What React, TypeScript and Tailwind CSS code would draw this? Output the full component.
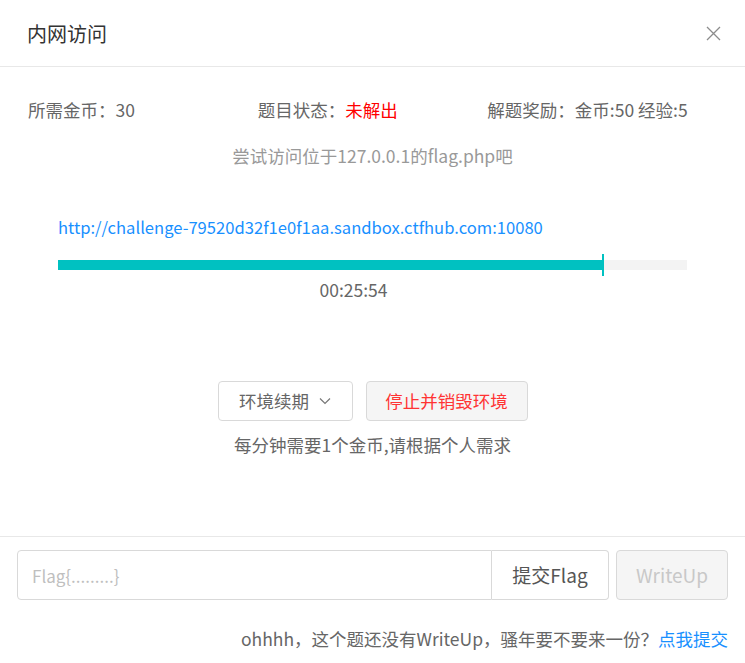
import React from "react";

export default function App() {
  const font = { fontFamily: '"Noto Sans CJK SC", "Noto Sans", sans-serif' };
  return (
    <div className="w-[745px] h-[663px] bg-white overflow-hidden text-[#666]" style={font}>
      {/* Header */}
      <div className="h-[67px] flex items-center justify-between pl-[27px] pr-[24px] border-b border-[#e8e8e8]">
        <div className="text-[20px] text-[#333] leading-none pt-[2px]">内网访问</div>
        <svg width="15" height="15" viewBox="0 0 15 15" className="text-[#8c8c8c]">
          <path d="M1 1 L14 14 M14 1 L1 14" stroke="currentColor" strokeWidth="1.3" fill="none" />
        </svg>
      </div>

      {/* Body */}
      <div className="h-[469px] flex flex-col">
        <div className="grid grid-cols-3 px-[28px] pt-[30px] text-[17.5px] leading-[26px]">
          <div className="whitespace-nowrap">所需金币：30</div>
          <div className="whitespace-nowrap">题目状态：<span className="text-[#ff0000]">未解出</span></div>
          <div className="whitespace-nowrap">解题奖励：金币:50 经验:5</div>
        </div>
        <div className="text-center text-[#999] text-[17.5px] leading-[26px] mt-[20px]">尝试访问位于127.0.0.1的flag.php吧</div>

        <div className="px-[58px] mt-[45px]">
          <div className="text-[#1890ff] text-[16.6px] leading-[26px]">http://challenge-79520d32f1e0f1aa.sandbox.ctfhub.com:10080</div>
          <div className="relative mt-[20px] h-[10px] bg-[#f3f3f3]">
            <div className="h-full bg-[#00c1c1]" style={{ width: "544px" }} />
            <div className="absolute left-[544px] top-[-6px] w-[2px] h-[22px] bg-[#00c1c1]" />
          </div>
          <div className="text-center text-[17.5px] leading-[26px] mt-[7px] pr-[38px]">00:25:54</div>
        </div>

        <div className="flex justify-center gap-[13px] mt-[78px]">
          <button className="w-[135px] h-[40px] border border-[#d9d9d9] rounded-[4px] bg-white text-[17.5px] text-[#666] flex items-center justify-center gap-[10px]">
            <span>环境续期</span>
            <svg width="12" height="8" viewBox="0 0 12 8">
              <path d="M1 1.5 L6 6.5 L11 1.5" stroke="#777" strokeWidth="1.2" fill="none" />
            </svg>
          </button>
          <button className="w-[162px] h-[40px] border border-[#d9d9d9] rounded-[4px] bg-[#f5f5f5] text-[17.5px] text-[#ff3333] flex items-center justify-center">
            停止并销毁环境
          </button>
        </div>
        <div className="text-center text-[17.5px] leading-[26px] mt-[11px]">每分钟需要1个金币,请根据个人需求</div>
      </div>

      {/* Footer */}
      <div className="border-t border-[#e8e8e8] px-[17px] pt-[13px]">
        <div className="flex gap-[7px]">
          <div className="flex flex-1">
            <input
              className="w-[475px] h-[50px] border border-[#d9d9d9] rounded-l-[4px] px-[14px] text-[17px] outline-none placeholder-[#bfbfbf]"
              placeholder="Flag{.........}"
              style={font}
            />
            <button className="w-[117px] h-[50px] border border-l-0 border-[#d9d9d9] rounded-r-[4px] bg-white text-[19px] text-[#555]" style={font}>
              提交Flag
            </button>
          </div>
          <button className="w-[113px] h-[50px] border border-[#d9d9d9] rounded-[4px] bg-[#f5f5f5] text-[19px] text-[#c8c8c8]" style={font}>
            WriteUp
          </button>
        </div>
        <div className="text-right text-[17.5px] leading-[26px] mt-[26px]">
          ohhhh，这个题还没有WriteUp，骚年要不要来一份？<span className="text-[#1890ff]">点我提交</span>
        </div>
      </div>
    </div>
  );
}
